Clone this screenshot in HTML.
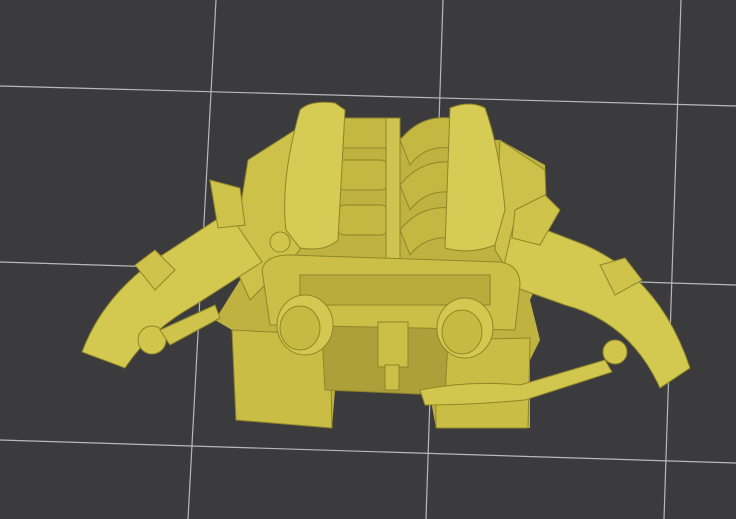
<!DOCTYPE html>
<html><head><style>
html,body{margin:0;padding:0;background:#3b3b3e;}
svg{display:block}
</style></head><body>
<svg width="736" height="519" viewBox="0 0 736 519" xmlns="http://www.w3.org/2000/svg">
<rect width="736" height="519" fill="#3b3b3e"/>
<g stroke="#b8b8b8" stroke-width="1.2" fill="none">
<line x1="0" y1="86" x2="736" y2="106"/>
<line x1="0" y1="262" x2="736" y2="285"/>
<line x1="0" y1="440" x2="736" y2="463"/>
<line x1="216" y1="0" x2="188" y2="519"/>
<line x1="443" y1="0" x2="426" y2="519"/>
<line x1="681" y1="0" x2="664" y2="519"/>
</g>
<g stroke="#8f8628" stroke-width="1">
<!-- backing mass -->
<polygon points="250,160 300,135 500,140 545,165 548,260 530,300 540,340 530,360 530,428 436,428 430,395 335,390 332,428 236,420 232,330 215,320 240,280 232,250" fill="#bfb241" stroke="none"/>
<!-- bottom blocks -->
<polygon points="232,330 330,335 332,428 236,420" fill="#c9bd45"/>
<polygon points="435,340 530,338 528,428 436,428" fill="#c9bd45"/>
<polygon points="320,300 450,305 445,395 325,390" fill="#ada03a"/>
<!-- side covers -->
<polygon points="248,160 295,130 300,250 250,300 232,260" fill="#cdc14a"/>
<polygon points="500,140 545,170 548,250 520,290 495,250" fill="#cdc14a"/>
<!-- left pipe -->
<path d="M82,352 Q105,290 170,250 L228,212 L262,262 L195,305 Q150,330 125,368 Z" fill="#d4c950"/>
<!-- right pipe -->
<path d="M515,218 L585,245 Q660,278 690,368 L660,388 Q630,322 565,305 L500,282 Z" fill="#d4c950"/>
<!-- runners -->
<rect x="335" y="118" width="60" height="30" rx="10" fill="#c4b742"/>
<rect x="335" y="160" width="55" height="30" rx="10" fill="#c4b742"/>
<rect x="335" y="205" width="55" height="30" rx="10" fill="#c4b742"/>
<path d="M400,140 Q420,115 450,118 L450,148 Q425,145 410,165 Z" fill="#c4b742"/>
<path d="M400,185 Q420,160 450,162 L450,192 Q425,190 410,210 Z" fill="#c4b742"/>
<path d="M400,230 Q420,205 450,208 L450,238 Q425,236 410,255 Z" fill="#c4b742"/>
<rect x="386" y="118" width="14" height="150" fill="#d0c450"/>
<!-- plenums -->
<path d="M300,110 Q310,100 335,103 L345,110 L338,240 Q325,252 300,248 L286,230 Q280,180 300,110 Z" fill="#d6cb55"/>
<path d="M450,108 Q470,100 485,108 Q500,150 505,210 L495,245 Q470,255 445,248 Z" fill="#d6cb55"/>
<!-- front frame -->
<path d="M262,270 Q265,255 290,255 L500,262 Q520,265 520,285 L515,330 L270,325 Z" fill="#cbbf48"/>
<rect x="300" y="275" width="190" height="30" fill="#b9ac3d"/>
<!-- pulleys -->
<ellipse cx="305" cy="325" rx="28" ry="30" fill="#d4c850"/>
<ellipse cx="300" cy="328" rx="20" ry="22" fill="#c6ba42"/>
<ellipse cx="465" cy="328" rx="28" ry="30" fill="#d4c850"/>
<ellipse cx="462" cy="332" rx="20" ry="22" fill="#c6ba42"/>
<rect x="378" y="322" width="30" height="45" fill="#cbbf48"/>
<rect x="385" y="365" width="14" height="25" fill="#cbbf48"/>
<!-- lower hoses -->
<path d="M420,390 Q470,380 520,385 L605,360 L612,372 L525,400 Q470,405 425,405 Z" fill="#d2c74e"/>
<circle cx="615" cy="352" r="12" fill="#d1c54c"/>
<circle cx="152" cy="340" r="14" fill="#d1c54c"/>
<path d="M160,330 L215,305 L220,318 L170,345 Z" fill="#cfc34b"/>
<path d="M210,180 L240,188 L245,225 L218,228 Z" fill="#cfc34b"/>
<path d="M515,210 L545,195 L560,210 L540,245 L512,238 Z" fill="#cfc34b"/>
<path d="M135,265 L155,250 L175,270 L155,290 Z" fill="#cfc34b"/>
<path d="M600,265 L625,258 L642,280 L615,295 Z" fill="#cfc34b"/>
<circle cx="280" cy="242" r="10" fill="#d1c54c"/>
</g>
</svg>
</body></html>
